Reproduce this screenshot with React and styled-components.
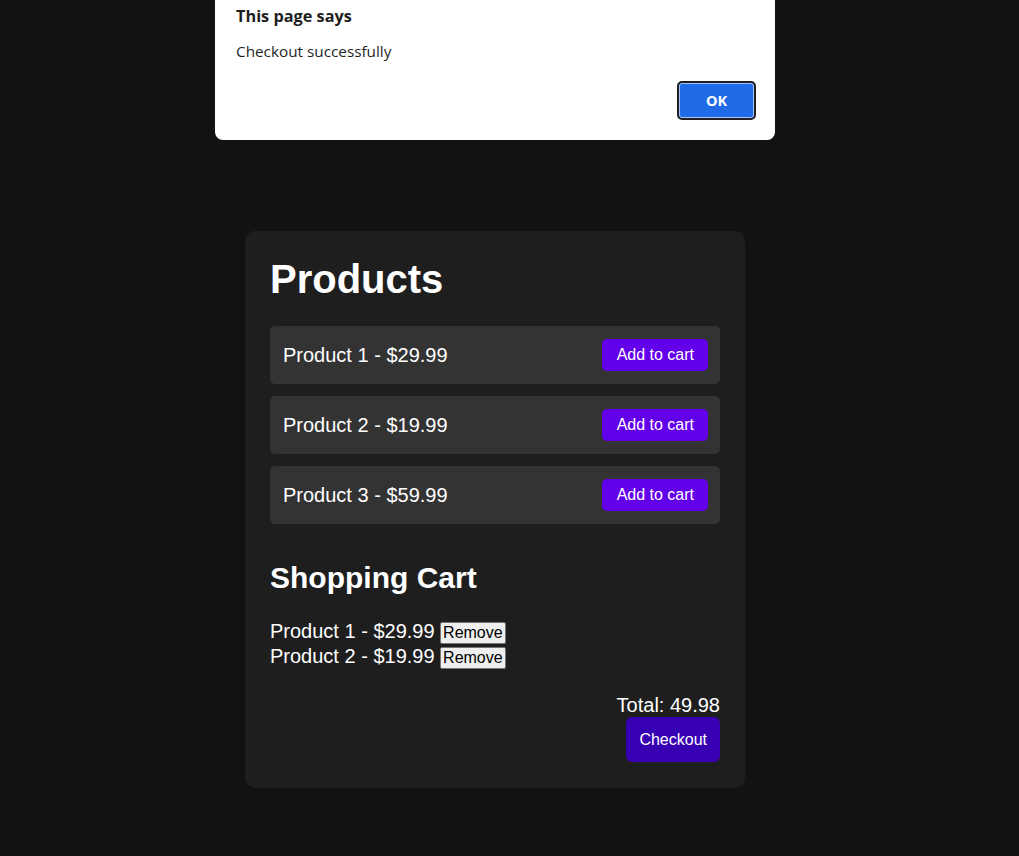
import React from "react";
import styled, { createGlobalStyle } from "styled-components";

const GlobalStyle = createGlobalStyle`
  html, body {
    margin: 0;
    padding: 0;
    background: #121212;
    color: #ffffff;
    font-family: "Liberation Sans", Arial, sans-serif;
  }
`;

const Page = styled.div`
  min-height: 856px;
  box-sizing: border-box;
  padding: 231px 0 0 245px;
  display: flex;
  align-items: flex-start;
`;

const Card = styled.div`
  width: 500px;
  box-sizing: border-box;
  padding: 25px 25px 26px;
  background: #1e1e1e;
  border-radius: 10px;
  display: flex;
  flex-direction: column;
`;

const Title = styled.h1`
  margin: 0 0 24px;
  font-size: 40px;
  font-weight: bold;
  line-height: 46px;
`;

const ProductList = styled.div`
  display: flex;
  flex-direction: column;
  gap: 12px;
`;

const ProductRow = styled.div`
  display: flex;
  align-items: center;
  justify-content: space-between;
  height: 58px;
  box-sizing: border-box;
  padding: 0 12px 0 13px;
  background: #333333;
  border-radius: 5px;
  font-size: 20px;
`;

const AddButton = styled.button`
  font-family: inherit;
  font-size: 16px;
  line-height: 18px;
  padding: 7px 14px 7px 15px;
  height: 32px;
  border: none;
  border-radius: 5px;
  background: #6200ea;
  color: #ffffff;
  cursor: pointer;
`;

const SubTitle = styled.h2`
  margin: 37px 0 24px;
  font-size: 30px;
  font-weight: bold;
  line-height: 34px;
`;

const CartList = styled.div`
  font-size: 20px;
`;

const CartItem = styled.div`
  line-height: 24.5px;
`;

const RemoveButton = styled.button`
  font-family: inherit;
  font-size: 16px;
  line-height: 18px;
  padding: 1px 2.5px;
  margin-left: 5px;
  border: 1px solid #767676;
  border-radius: 2px;
  background: #efefef;
  color: #000000;
  vertical-align: baseline;
`;

const Footer = styled.div`
  margin-top: 25px;
  display: flex;
  flex-direction: column;
  align-items: flex-end;
`;

const Total = styled.div`
  font-size: 20px;
  line-height: 23px;
`;

const CheckoutButton = styled.button`
  font-family: inherit;
  font-size: 16px;
  line-height: 19px;
  height: 45px;
  padding: 0 13px;
  border: none;
  border-radius: 6px;
  background: #3700b3;
  color: #ffffff;
  cursor: pointer;
`;

const Dialog = styled.div`
  position: fixed;
  left: 215px;
  top: 0;
  width: 560px;
  height: 140px;
  box-sizing: border-box;
  background: #ffffff;
  border-radius: 0 0 8px 8px;
  padding: 5px 19px 0 21px;
  font-family: "Open Sans", "Noto Sans", sans-serif;
  color: #1f1f1f;
  display: flex;
  flex-direction: column;
`;

const DialogTitle = styled.div`
  font-size: 16.3px;
  font-weight: 700;
  line-height: 22px;
`;

const DialogMessage = styled.div`
  margin-top: 14px;
  font-size: 15.3px;
  line-height: 20px;
`;

const DialogActions = styled.div`
  display: flex;
  justify-content: flex-end;
  margin-top: 20px;
`;

const OkButton = styled.button`
  width: 79px;
  height: 39px;
  box-sizing: border-box;
  border: 2px solid #1f2024;
  border-radius: 5px;
  background: #1f6be8;
  box-shadow: inset 0 0 0 1px #a8c4f7;
  color: #ffffff;
  font-family: "Open Sans", "Noto Sans", sans-serif;
  font-size: 14.5px;
  font-weight: 700;
  cursor: pointer;
`;

const products = [
  { id: 1, name: "Product 1", price: 29.99 },
  { id: 2, name: "Product 2", price: 19.99 },
  { id: 3, name: "Product 3", price: 59.99 },
];

const cart = [products[0], products[1]];

export default function App() {
  const total = cart.reduce((s, p) => s + p.price, 0).toFixed(2);
  return (
    <>
      <GlobalStyle />
      <Page>
        <Card>
          <Title>Products</Title>
          <ProductList>
            {products.map((p) => (
              <ProductRow key={p.id}>
                <span>
                  {p.name} - ${p.price}
                </span>
                <AddButton>Add to cart</AddButton>
              </ProductRow>
            ))}
          </ProductList>
          <SubTitle>Shopping Cart</SubTitle>
          <CartList>
            {cart.map((p) => (
              <CartItem key={p.id}>
                {p.name} - ${p.price}
                <RemoveButton>Remove</RemoveButton>
              </CartItem>
            ))}
          </CartList>
          <Footer>
            <Total>Total: {total}</Total>
            <CheckoutButton>Checkout</CheckoutButton>
          </Footer>
        </Card>
      </Page>
      <Dialog>
        <DialogTitle>This page says</DialogTitle>
        <DialogMessage>Checkout successfully</DialogMessage>
        <DialogActions>
          <OkButton>OK</OkButton>
        </DialogActions>
      </Dialog>
    </>
  );
}
